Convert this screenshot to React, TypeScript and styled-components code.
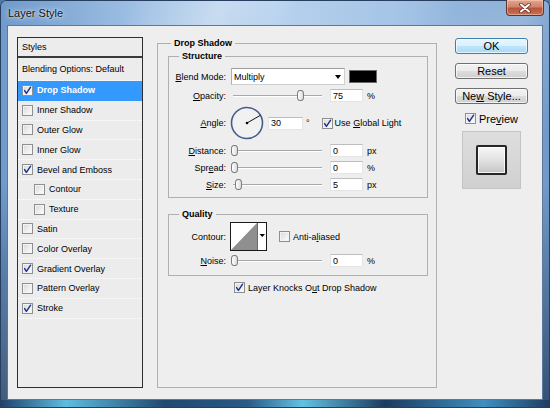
import React from "react";
import styled, { createGlobalStyle } from "styled-components";

const GlobalStyle = createGlobalStyle`
  html, body { margin: 0; padding: 0; }
  body {
    width: 550px; height: 408px; overflow: hidden;
    background: #4f7aa8;
    font-family: "Liberation Sans", Arial, sans-serif;
    font-size: 9px;
    color: #000;
  }
  *, *::before, *::after { box-sizing: border-box; }
`;

const Frame = styled.div`
  position: relative;
  width: 550px;
  height: 408px;
  display: flex;
  flex-direction: column;
  padding: 0 7px 8px;
  border-radius: 6px 6px 0 0;
  box-shadow: inset 0 0 0 1px #263f5e;
  background:
    linear-gradient(to right, #1f4168 0%, #5fbde0 12%, #214870 30%, #2a5a86 45%, #63c2e3 55%, #1c3b60 70%, #3f8fbf 88%, #1d3c62 100%) bottom / 100% 8px no-repeat,
    linear-gradient(to bottom, rgba(0,0,0,0) 0%, rgba(0,0,0,0) 45%, rgba(10,30,58,0.6) 100%),
    linear-gradient(115deg, rgba(255,255,255,0) 18%, rgba(255,255,255,0.32) 30%, rgba(255,255,255,0) 40%, rgba(255,255,255,0) 62%, rgba(255,255,255,0.22) 72%, rgba(255,255,255,0) 82%),
    linear-gradient(to right, #6f9acb 0%, #9fc0e4 25%, #b8d2ee 50%, #a2c2e5 75%, #7099c9 100%);
`;

const TitleBar = styled.div`
  height: 25px;
  flex: none;
  display: flex;
  align-items: center;
  padding-left: 1px;
  font-size: 11px;
  color: #111;
  text-shadow: 0 0 6px rgba(255, 255, 255, 0.9), 0 0 2px rgba(255, 255, 255, 0.8);
`;

const CloseButton = styled.div`
  position: absolute;
  top: 0;
  right: 6px;
  width: 38px;
  height: 16px;
  display: flex;
  align-items: center;
  justify-content: center;
  border: 1px solid #5b3630;
  border-top: none;
  border-radius: 0 0 4px 4px;
  background: linear-gradient(to bottom, #e3a590 0%, #d0846b 45%, #b9533a 55%, #c9715a 100%);
  box-shadow: inset 0 0 0 1px rgba(255, 220, 200, 0.45);
`;

const Client = styled.div`
  flex: 1;
  display: grid;
  grid-template-columns: 126px 280px 77px;
  column-gap: 14px;
  padding: 11px 9px;
  background: #eeeeee;
  border: 1px solid #5d7898;
`;

/* ---------- left list ---------- */

const StylesPanel = styled.div`
  display: flex;
  flex-direction: column;
  border: 1px solid #2e2e2e;
  background: #ececec;
`;

const PanelHeader = styled.div`
  height: 20px;
  display: flex;
  align-items: center;
  padding-left: 4px;
  border-bottom: 2px solid #3a3a3a;
`;

const BlendRow = styled.div`
  height: 23px;
  display: flex;
  align-items: center;
  padding-left: 4px;
  border-bottom: 1px dotted #ffffff;
`;

const StyleRow = styled.div<{ $selected?: boolean; $indent?: boolean }>`
  height: 19.8px;
  display: flex;
  align-items: center;
  gap: 4px;
  padding-left: ${(p) => (p.$indent ? 16 : 4)}px;
  border-bottom: 1px dotted ${(p) => (p.$selected ? "#3399ff" : "#ffffff")};
  background: ${(p) => (p.$selected ? "#3399ff" : "transparent")};
  color: ${(p) => (p.$selected ? "#ffffff" : "#000000")};
  font-weight: ${(p) => (p.$selected ? "bold" : "normal")};
`;

/* ---------- checkbox ---------- */

const Box = styled.span<{ $size?: number }>`
  flex: none;
  width: ${(p) => p.$size ?? 11}px;
  height: ${(p) => p.$size ?? 11}px;
  display: inline-flex;
  align-items: center;
  justify-content: center;
  border: 1px solid #8e8f8f;
  background: linear-gradient(135deg, #d6d6d6 0%, #eeeeee 55%, #ffffff 100%);
  box-shadow: inset 0 0 0 1px #f4f4f4;
`;

const Check: React.FC<{ checked?: boolean; size?: number }> = ({ checked, size }) => (
  <Box $size={size}>
    {checked && (
      <svg width="9" height="9" viewBox="0 0 9 9">
        <path d="M1.6 4.6 L3.4 7.4 L7.6 1.2" fill="none" stroke="#1f3590" strokeWidth="1.5" strokeLinecap="round" strokeLinejoin="round" />
      </svg>
    )}
  </Box>
);

const CheckLabel = styled.span<{ $gap?: number; $ml?: number }>`
  display: inline-flex;
  align-items: center;
  gap: ${(p) => p.$gap ?? 3}px;
  margin-left: ${(p) => p.$ml ?? 0}px;
`;

const Key = styled.span`
  text-decoration: underline;
`;

/* ---------- middle ---------- */

const Group = styled.fieldset<{ $pad: string; $mt?: number; $fill?: boolean }>`
  margin: ${(p) => p.$mt ?? 0}px 0 0;
  min-width: 0;
  padding: ${(p) => p.$pad};
  border: 1px solid #b0b0b0;
  ${(p) => (p.$fill ? "height: 100%;" : "")}
`;

const Legend = styled.legend<{ $ml: number }>`
  font-weight: bold;
  line-height: 12px;
  padding: 0 3px;
  margin-left: ${(p) => p.$ml}px;
`;

const Rows = styled.div<{ $gap: number }>`
  display: flex;
  flex-direction: column;
  gap: ${(p) => p.$gap}px;
`;

const Row = styled.div<{ $h: number; $ml?: number; $mt?: number }>`
  height: ${(p) => p.$h}px;
  display: flex;
  align-items: center;
  margin-left: ${(p) => p.$ml ?? 0}px;
  margin-top: ${(p) => p.$mt ?? 0}px;
`;

const Label = styled.span`
  flex: none;
  width: 57px;
  text-align: right;
  white-space: nowrap;
`;

const Select = styled.div`
  margin-left: 5px;
  width: 114px;
  height: 17px;
  display: flex;
  align-items: center;
  justify-content: space-between;
  padding: 0 3px 0 2px;
  background: #ffffff;
  border: 1px solid #d0d0d0;
  border-top-color: #9c9c9c;
  border-left-color: #b0b0b0;
`;

const Arrow = styled.span`
  width: 0;
  height: 0;
  border-left: 3.5px solid transparent;
  border-right: 3.5px solid transparent;
  border-top: 4px solid #000;
`;

const Swatch = styled.div`
  margin-left: 4px;
  width: 28px;
  height: 13px;
  background: #000;
  border: 1px solid #6a6a6a;
`;

const Track = styled.div`
  position: relative;
  flex: none;
  margin: 0 8px 0 7px;
  width: 89px;
  height: 13px;
  &::before {
    content: "";
    position: absolute;
    left: 0;
    right: 0;
    top: 6px;
    height: 2px;
    border-top: 1px solid #a9a9a9;
    border-bottom: 1px solid #ffffff;
  }
`;

const Thumb = styled.div`
  position: absolute;
  top: 1px;
  width: 7px;
  height: 11px;
  border: 1px solid #7c7c7c;
  border-radius: 3px 3px 3px 3px / 4px 4px 4px 4px;
  background: linear-gradient(to right, #ffffff, #dcdcdc);
`;

const Field = styled.input<{ $w: number; $ml?: number }>`
  flex: none;
  width: ${(p) => p.$w}px;
  height: 13px;
  margin: 0 0 0 ${(p) => p.$ml ?? 0}px;
  padding: 0 2px;
  font: inherit;
  color: #000;
  background: #ffffff;
  border: 1px solid #e4e4e4;
  border-top-color: #bdbdbd;
  outline: none;
`;

const Unit = styled.span<{ $ml?: number }>`
  margin-left: ${(p) => p.$ml ?? 4}px;
`;

const DialBox = styled.div`
  margin-left: 4px;
  width: 34px;
  height: 34px;
  flex: none;
`;

const ContourBox = styled.div`
  margin-left: 4px;
  width: 37px;
  height: 29px;
  flex: none;
`;

/* ---------- right ---------- */

const Side = styled.div`
  display: flex;
  flex-direction: column;
  margin-left: 4px;
  padding-top: 1px;
`;

const Button = styled.button<{ $default?: boolean }>`
  height: 16px;
  margin: 0 0 9px;
  padding: 0;
  font: 11px "Liberation Sans", Arial, sans-serif;
  color: #000;
  border-radius: 3px;
  border: 1px solid ${(p) => (p.$default ? "#3c7fb1" : "#707070")};
  background: ${(p) =>
    p.$default
      ? "linear-gradient(to bottom, #eaf6fd 0%, #d9f0fc 50%, #bee6fd 51%, #a7d9f5 100%)"
      : "linear-gradient(to bottom, #f2f2f2 0%, #ebebeb 50%, #dddddd 51%, #cfcfcf 100%)"};
  box-shadow: inset 0 0 0 1px rgba(255, 255, 255, 0.7);
`;

const PreviewRow = styled.div`
  height: 11px;
  display: flex;
  justify-content: center;
  align-items: center;
  margin-bottom: 7px;
  font-size: 11px;
`;

const PreviewBox = styled.div`
  align-self: center;
  width: 59px;
  height: 58px;
  display: flex;
  align-items: center;
  justify-content: center;
  border: 1px solid #c4c4c4;
  background: linear-gradient(to bottom, #dedede, #d0d0d0);
`;

const PreviewSquare = styled.div`
  width: 31px;
  height: 30px;
  border: 2px solid #262626;
  border-radius: 2px;
  background: linear-gradient(to bottom, #f7f7f7 0%, #e2e2e2 50%, #c4c4c4 100%);
  box-shadow: inset 0 0 0 1px rgba(255, 255, 255, 0.8);
`;

/* ---------- pieces ---------- */

const Slider: React.FC<{ pct: number }> = ({ pct }) => (
  <Track>
    <Thumb style={{ left: `${pct * 0.89 - 2.5}px` }} />
  </Track>
);

const Dial = () => (
  <DialBox>
    <svg width="34" height="34" viewBox="0 0 34 34">
      <circle cx="17" cy="17" r="15.5" fill="#f1f1f1" stroke="#465b88" strokeWidth="1.6" />
      <line x1="17" y1="17" x2="30.4" y2="9.3" stroke="#111" strokeWidth="1" />
      <circle cx="17" cy="17" r="1.3" fill="#000" />
    </svg>
  </DialBox>
);

const ContourPicker = () => (
  <ContourBox>
    <svg width="37" height="29" viewBox="0 0 37 29">
      <rect x="0.5" y="0.5" width="36" height="28" fill="#ffffff" stroke="#1a1a1a" />
      <polygon points="1,28 27,1 27,28" fill="#8f8f8f" />
      <line x1="27.5" y1="1" x2="27.5" y2="28" stroke="#6a6a6a" />
      <polygon points="29.5,12 35,12 32.25,15" fill="#000" />
    </svg>
  </ContourBox>
);

const styleItems: { label: string; checked?: boolean; selected?: boolean; indent?: boolean }[] = [
  { label: "Drop Shadow", checked: true, selected: true },
  { label: "Inner Shadow" },
  { label: "Outer Glow" },
  { label: "Inner Glow" },
  { label: "Bevel and Emboss", checked: true },
  { label: "Contour", indent: true },
  { label: "Texture", indent: true },
  { label: "Satin" },
  { label: "Color Overlay" },
  { label: "Gradient Overlay", checked: true },
  { label: "Pattern Overlay" },
  { label: "Stroke", checked: true },
];

export default function App() {
  return (
    <>
      <GlobalStyle />
      <Frame>
        <TitleBar>Layer Style</TitleBar>
        <CloseButton>
          <svg width="12" height="10" viewBox="0 0 12 10">
            <path d="M2 1.5 L10 8.5 M10 1.5 L2 8.5" stroke="#5b2a22" strokeWidth="3.6" strokeLinecap="round" />
            <path d="M2 1.5 L10 8.5 M10 1.5 L2 8.5" stroke="#ffffff" strokeWidth="2" strokeLinecap="round" />
          </svg>
        </CloseButton>
        <Client>
          <StylesPanel>
            <PanelHeader>Styles</PanelHeader>
            <BlendRow>Blending Options: Default</BlendRow>
            {styleItems.map((it) => (
              <StyleRow key={it.label} $selected={it.selected} $indent={it.indent}>
                <Check checked={it.checked} />
                <span>{it.label}</span>
              </StyleRow>
            ))}
          </StylesPanel>

          <Group $pad="1px 8px 0 10px" $fill>
            <Legend $ml={3}>Drop Shadow</Legend>
            <Group $pad="6px 0 6px 0">
              <Legend $ml={10}>Structure</Legend>
              <Rows $gap={4}>
                <Row $h={17}>
                  <Label>
                    <Key>B</Key>lend Mode:
                  </Label>
                  <Select>
                    <span>Multiply</span>
                    <Arrow />
                  </Select>
                  <Swatch />
                </Row>
                <Row $h={13}>
                  <Label>
                    <Key>O</Key>pacity:
                  </Label>
                  <Slider pct={75} />
                  <Field $w={33} readOnly value="75" />
                  <Unit>%</Unit>
                </Row>
                <Row $h={34}>
                  <Label>
                    <Key>A</Key>ngle:
                  </Label>
                  <Dial />
                  <Field $w={35} $ml={4} readOnly value="30" />
                  <Unit $ml={3}>°</Unit>
                  <CheckLabel $ml={12} $gap={2}>
                    <Check checked />
                    <span>
                      Use <Key>G</Key>lobal Light
                    </span>
                  </CheckLabel>
                </Row>
                <Row $h={13}>
                  <Label>
                    <Key>D</Key>istance:
                  </Label>
                  <Slider pct={0} />
                  <Field $w={33} readOnly value="0" />
                  <Unit>px</Unit>
                </Row>
                <Row $h={13}>
                  <Label>
                    Spr<Key>e</Key>ad:
                  </Label>
                  <Slider pct={0} />
                  <Field $w={33} readOnly value="0" />
                  <Unit>%</Unit>
                </Row>
                <Row $h={13}>
                  <Label>
                    <Key>S</Key>ize:
                  </Label>
                  <Slider pct={4.5} />
                  <Field $w={33} readOnly value="5" />
                  <Unit>px</Unit>
                </Row>
              </Rows>
            </Group>

            <Group $pad="2px 0 8px 0" $mt={10}>
              <Legend $ml={10}>Quality</Legend>
              <Rows $gap={3}>
                <Row $h={29}>
                  <Label>Contour:</Label>
                  <ContourPicker />
                  <CheckLabel $ml={12}>
                    <Check />
                    <span>
                      Anti-a<Key>l</Key>iased
                    </span>
                  </CheckLabel>
                </Row>
                <Row $h={13}>
                  <Label>
                    <Key>N</Key>oise:
                  </Label>
                  <Slider pct={0} />
                  <Field $w={33} readOnly value="0" />
                  <Unit>%</Unit>
                </Row>
              </Rows>
            </Group>

            <Row $h={13} $ml={66} $mt={5}>
              <CheckLabel>
                <Check checked />
                <span>
                  Layer Knocks O<Key>u</Key>t Drop Shadow
                </span>
              </CheckLabel>
            </Row>
          </Group>

          <Side>
            <Button $default>OK</Button>
            <Button>Reset</Button>
            <Button>
              Ne<Key>w</Key> Style...
            </Button>
            <PreviewRow>
              <CheckLabel $gap={3}>
                <Check checked />
                <span>
                  Pre<Key>v</Key>iew
                </span>
              </CheckLabel>
            </PreviewRow>
            <PreviewBox>
              <PreviewSquare />
            </PreviewBox>
          </Side>
        </Client>
      </Frame>
    </>
  );
}
